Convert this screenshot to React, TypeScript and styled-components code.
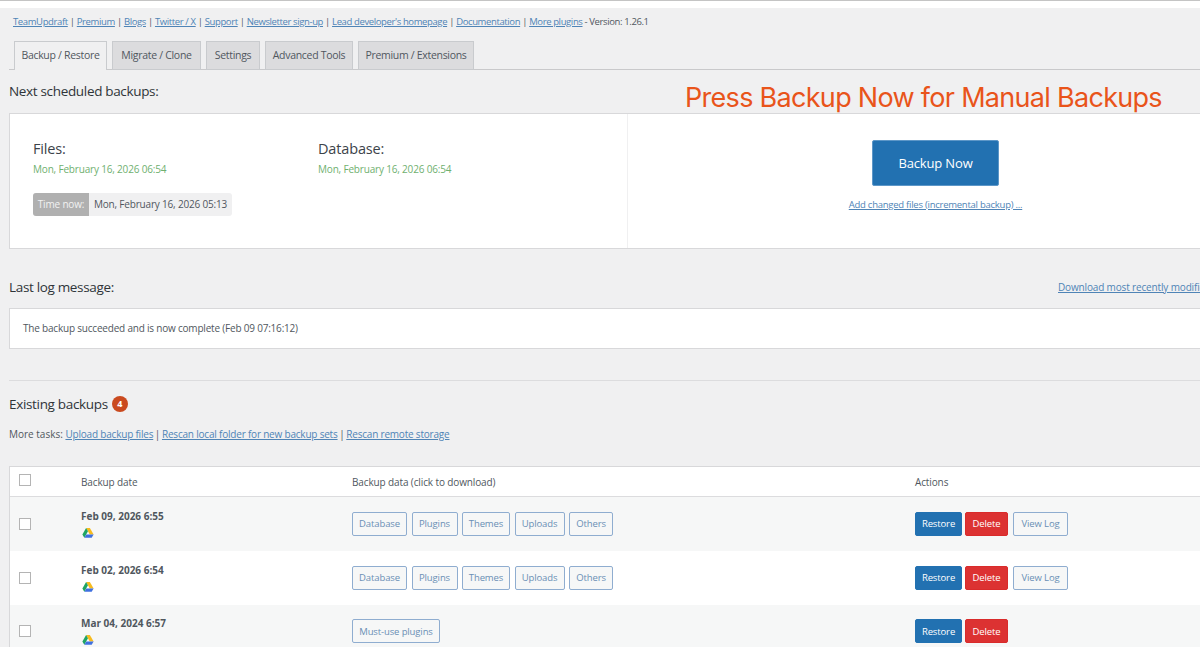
import React from "react";
import styled, { createGlobalStyle } from "styled-components";

const Global = createGlobalStyle`
  html, body { margin: 0; padding: 0; background: #f0f0f1; overflow: hidden; }
  body { font-family: "Open Sans", "Liberation Sans", sans-serif; color: #50575e; }
`;

const Page = styled.div`
  position: relative;
  width: 1200px;
  height: 647px;
  overflow: hidden;
  border-top: 1px solid #c4c4c4;
  box-sizing: border-box;
`;
const TopStrip = styled.div`
  height: 7px;
  background: #fff;
`;
const Wrap = styled.div`
  width: 1240px;
  padding-left: 9px;
  box-sizing: border-box;
`;
const Link = styled.a`
  color: #4f84b6;
  text-decoration: underline;
  cursor: pointer;
`;
const TopLinks = styled.div`
  height: 26px;
  margin-bottom: 7px;
  padding: 0 0 0 4px;
  font-size: 9.5px;
  letter-spacing: -0.38px;
  line-height: 28px;
  color: #50575e;
  white-space: pre;
`;
const TabBar = styled.div`
  display: flex;
  gap: 5px;
  height: 28px;
  padding-left: 5px;
  border-bottom: 1px solid #c9c9cb;
`;
const Tab = styled.div<{ $active?: boolean; $w: number }>`
  flex: none;
  width: ${(p) => p.$w}px;
  height: 29px;
  box-sizing: border-box;
  border: 1px solid #c9cbce;
  border-bottom: ${(p) => (p.$active ? "none" : "1px solid #c9cbce")};
  background: ${(p) => (p.$active ? "#f0f0f1" : "#dcdcde")};
  color: #50575e;
  font-size: 10.5px;
  font-weight: 500;
  letter-spacing: -0.3px;
  line-height: 27px;
  text-align: center;
`;
const Heading = styled.h3`
  margin: 0;
  font-size: 13.5px;
  font-weight: 500;
  letter-spacing: -0.33px;
  color: #2f3438;
  line-height: 18px;
`;
const NextHeading = styled(Heading)`
  padding-top: 12px;
  height: 31px;
`;
const Card = styled.div`
  display: flex;
  height: 136px;
  box-sizing: border-box;
  background: #fff;
  border: 1px solid #d8d8da;
`;
const ScheduleSide = styled.div`
  flex: none;
  width: 618px;
  box-sizing: border-box;
  border-right: 1px solid #f0f0f1;
  padding: 25px 0 0 23px;
`;
const ScheduleCols = styled.div`
  display: flex;
`;
const ScheduleCol = styled.div`
  width: 285px;
`;
const ColTitle = styled.div`
  font-size: 14.5px;
  font-weight: 500;
  letter-spacing: -0.15px;
  color: #3c434a;
  line-height: 20px;
`;
const GreenDate = styled.div`
  margin-top: 3px;
  font-size: 10px;
  letter-spacing: -0.18px;
  line-height: 14px;
  color: #6fb06f;
`;
const TimeNow = styled.div`
  display: inline-flex;
  margin-top: 17px;
  height: 23px;
  line-height: 23px;
  font-size: 10px;
  letter-spacing: -0.18px;
  border-radius: 3px;
  overflow: hidden;
  background: #f0f0f1;
`;
const TimeLabel = styled.span`
  width: 56px;
  text-align: center;
  background: #b0b0b0;
  color: #f2f2f2;
`;
const TimeValue = styled.span`
  width: 143px;
  text-align: center;
  color: #50575e;
`;
const ActionSide = styled.div`
  flex: none;
  width: 615px;
  display: flex;
  flex-direction: column;
  align-items: center;
  padding-top: 26px;
  box-sizing: border-box;
`;
const BackupNow = styled.button`
  width: 127px;
  height: 46px;
  background: #2271b1;
  border: 1px solid #5d97c8;
  border-radius: 2px;
  color: #fff;
  font: 500 13px "Open Sans", sans-serif;
  letter-spacing: -0.15px;
  padding: 0;
`;
const SmallLink = styled(Link)`
  margin-top: 12px;
  font-size: 9.5px;
  letter-spacing: -0.25px;
  line-height: 14px;
`;
const LogHeader = styled.div`
  display: flex;
  align-items: center;
  height: 18px;
  margin-top: 29px;
`;
const RightLink = styled(Link)`
  margin-left: auto;
  width: 182px;
  font-size: 10px;
  letter-spacing: -0.15px;
  white-space: nowrap;
`;
const LogBox = styled.div`
  margin-top: 12px;
  height: 41px;
  box-sizing: border-box;
  background: #fff;
  border: 1px solid #d8d8da;
  padding-left: 13px;
  font-size: 10px;
  letter-spacing: -0.2px;
  line-height: 39px;
`;
const Rule = styled.hr`
  margin: 31px 0 0;
  border: 0;
  border-top: 1px solid #dcdcde;
`;
const ExistingRow = styled.div`
  display: flex;
  align-items: center;
  gap: 4px;
  margin-top: 14px;
  height: 18px;
`;
const Badge = styled.span`
  width: 16px;
  height: 16px;
  border-radius: 50%;
  background: #ca4a1f;
  color: #fff;
  font-size: 9px;
  font-weight: 700;
  line-height: 16px;
  text-align: center;
`;
const Tasks = styled.div`
  margin-top: 14px;
  font-size: 10px;
  line-height: 14px;
  color: #50575e;
  white-space: pre;
`;
const TaskLink = styled(Link)`
  letter-spacing: -0.2px;
`;
const Sep = styled.span`
  margin: 0 -1px;
`;
const Table = styled.div`
  margin-top: 25px;
  background: #fff;
  border: 1px solid #d8d8da;
  border-bottom: none;
`;
const Row = styled.div<{ $head?: boolean; $alt?: boolean }>`
  display: grid;
  grid-template-columns: 71px 271px 563px 1fr;
  align-items: center;
  box-sizing: border-box;
  height: ${(p) => (p.$head ? 30 : 53.75)}px;
  background: ${(p) => (p.$alt ? "#f6f7f7" : "#fff")};
  border-bottom: ${(p) => (p.$head ? "1px solid #dcdcde" : "none")};
  font-size: 10px;
  font-weight: ${(p) => (p.$head ? 500 : 400)};
  letter-spacing: ${(p) => (p.$head ? "-0.12px" : "0")};
`;
const CheckCell = styled.div`
  padding-left: 9px;
`;
const HeadCheckCell = styled(CheckCell)`
  padding-bottom: 3px;
`;
const Check = styled.span`
  display: block;
  width: 12px;
  height: 12px;
  box-sizing: border-box;
  border: 1px solid #b4b4b4;
  background: #fff;
`;
const DateCell = styled.div`
  font-weight: 700;
  font-size: 10px;
  line-height: 14px;
  color: #50575e;
`;
const DriveWrap = styled.div`
  margin: 4px 0 0 1px;
  height: 12px;
`;
const Buttons = styled.div`
  display: flex;
  gap: 4.5px;
`;
const Btn = styled.button<{ $kind?: "ghost" | "blue" | "red"; $w: number }>`
  height: 24px;
  box-sizing: border-box;
  padding: 0;
  border-radius: 2px;
  font: 400 9.5px "Open Sans", sans-serif;
  letter-spacing: -0.12px;
  width: ${(p) => p.$w}px;
  background: ${(p) =>
    p.$kind === "blue" ? "#2271b1" : p.$kind === "red" ? "#dc3232" : "#f6f7f7"};
  border: 1px solid
    ${(p) =>
      p.$kind === "blue" ? "#2271b1" : p.$kind === "red" ? "#d92b2b" : "#8fadd0"};
  color: ${(p) => (p.$kind === "blue" || p.$kind === "red" ? "#fff" : "#6a8fb5")};
`;
const ActionButtons = styled(Buttons)`
  gap: 3px;
`;
const ViewLog = styled(Btn)`
  margin-left: 2px;
`;
const Callout = styled.div`
  position: absolute;
  left: 685px;
  top: 79px;
  font-family: Inter, "Liberation Sans", sans-serif;
  font-size: 27px;
  line-height: 36px;
  letter-spacing: -0.7px;
  color: #e9541a;
  white-space: nowrap;
`;

const Drive = () => (
  <svg width="12" height="12" viewBox="0 0 24 24" aria-hidden="true">
    <path d="M8.2 2h7.6l7.4 13h-7.6z" fill="#f7bb1e" />
    <path d="M8.2 2L.8 15l3.8 6.6L12 8.6z" fill="#1fa463" />
    <path d="M8.6 15h14.6l-3.8 6.6H4.6z" fill="#3f70e0" />
  </svg>
);

const topLinks = [
  "TeamUpdraft",
  "Premium",
  "Blogs",
  "Twitter / X",
  "Support",
  "Newsletter sign-up",
  "Lead developer's homepage",
  "Documentation",
  "More plugins",
];
const tabs: [string, number][] = [
  ["Backup / Restore", 93],
  ["Migrate / Clone", 89],
  ["Settings", 54],
  ["Advanced Tools", 88],
  ["Premium / Extensions", 116],
];
const fullSet: [string, number][] = [
  ["Database", 55],
  ["Plugins", 46],
  ["Themes", 48],
  ["Uploads", 50],
  ["Others", 44],
];
const rows = [
  { date: "Feb 09, 2026 6:55", data: fullSet, log: true, alt: true },
  { date: "Feb 02, 2026 6:54", data: fullSet, log: true, alt: false },
  { date: "Mar 04, 2024 6:57", data: [["Must-use plugins", 88]] as [string, number][], log: false, alt: true },
];

export default function App() {
  return (
    <Page>
      <Global />
      <TopStrip />
      <Wrap>
        <TopLinks>
          {topLinks.map((l, i) => (
            <React.Fragment key={l}>
              {i > 0 && " | "}
              <Link>{l}</Link>
            </React.Fragment>
          ))}
          {" - Version: 1.26.1"}
        </TopLinks>
        <TabBar>
          {tabs.map(([t, w], i) => (
            <Tab key={t} $active={i === 0} $w={w}>
              {t}
            </Tab>
          ))}
        </TabBar>
        <NextHeading>Next scheduled backups:</NextHeading>
        <Card>
          <ScheduleSide>
            <ScheduleCols>
              <ScheduleCol>
                <ColTitle>Files:</ColTitle>
                <GreenDate>Mon, February 16, 2026 06:54</GreenDate>
              </ScheduleCol>
              <ScheduleCol>
                <ColTitle>Database:</ColTitle>
                <GreenDate>Mon, February 16, 2026 06:54</GreenDate>
              </ScheduleCol>
            </ScheduleCols>
            <TimeNow>
              <TimeLabel>Time now:</TimeLabel>
              <TimeValue>Mon, February 16, 2026 05:13</TimeValue>
            </TimeNow>
          </ScheduleSide>
          <ActionSide>
            <BackupNow>Backup Now</BackupNow>
            <SmallLink>Add changed files (incremental backup) ...</SmallLink>
          </ActionSide>
        </Card>
        <LogHeader>
          <Heading>Last log message:</Heading>
          <RightLink>Download most recently modified log file</RightLink>
        </LogHeader>
        <LogBox>The backup succeeded and is now complete (Feb 09 07:16:12)</LogBox>
        <Rule />
        <ExistingRow>
          <Heading>Existing backups</Heading>
          <Badge>4</Badge>
        </ExistingRow>
        <Tasks>
          {"More tasks: "}
          <TaskLink>Upload backup files</TaskLink>
          <Sep>{" | "}</Sep>
          <TaskLink>Rescan local folder for new backup sets</TaskLink>
          <Sep>{" | "}</Sep>
          <TaskLink>Rescan remote storage</TaskLink>
        </Tasks>
        <Table>
          <Row $head>
            <HeadCheckCell>
              <Check />
            </HeadCheckCell>
            <div>Backup date</div>
            <div>Backup data (click to download)</div>
            <div>Actions</div>
          </Row>
          {rows.map((r) => (
            <Row key={r.date} $alt={r.alt}>
              <CheckCell>
                <Check />
              </CheckCell>
              <DateCell>
                {r.date}
                <DriveWrap>
                  <Drive />
                </DriveWrap>
              </DateCell>
              <Buttons>
                {r.data.map(([b, w]) => (
                  <Btn key={b} $w={w}>
                    {b}
                  </Btn>
                ))}
              </Buttons>
              <ActionButtons>
                <Btn $kind="blue" $w={47}>
                  Restore
                </Btn>
                <Btn $kind="red" $w={43}>
                  Delete
                </Btn>
                {r.log && <ViewLog $w={55}>View Log</ViewLog>}
              </ActionButtons>
            </Row>
          ))}
        </Table>
      </Wrap>
      <Callout>Press Backup Now for Manual Backups</Callout>
    </Page>
  );
}
